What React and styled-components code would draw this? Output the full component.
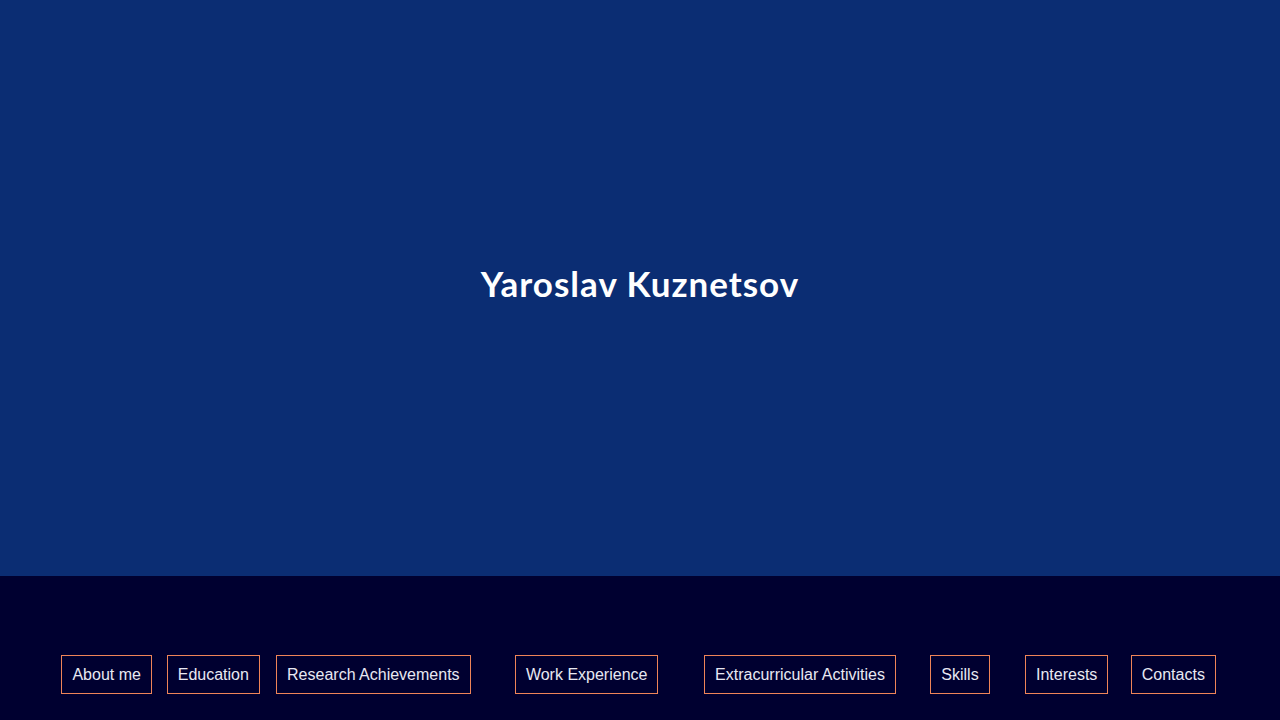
import React from "react";
import styled, { createGlobalStyle } from "styled-components";

const Global = createGlobalStyle`
  html, body { margin: 0; padding: 0; }
  body { background: #000030; font-family: "Liberation Sans", Arial, sans-serif; }
  * { box-sizing: border-box; }
`;

const Page = styled.div`
  display: flex;
  flex-direction: column;
  width: 100%;
  height: 720px;
  overflow: hidden;
`;

const Hero = styled.header`
  height: 576px;
  background: #0b2d73;
  display: flex;
  align-items: center;
  justify-content: center;
`;

const Title = styled.h1`
  margin: 0 0 10px;
  color: #ffffff;
  font-family: "Lato", "Noto Sans", sans-serif;
  font-weight: 700;
  font-size: 35px;
  letter-spacing: 1px;
  line-height: 1;
`;

const Footer = styled.nav`
  flex: 1;
  background: #000030;
  padding: 79px 53.33px 0;
  display: grid;
  grid-template-columns: 1fr 1fr 2fr 2fr 2fr 1fr 1fr 1fr;
  align-items: start;
`;

const Cell = styled.div`
  display: flex;
  justify-content: center;
`;

const NavButton = styled.a`
  display: inline-block;
  padding: 10px 10px;
  line-height: 17px;
  font-size: 16px;
  color: #e8e8f2;
  border: 1px solid #ee8458;
  text-decoration: none;
  white-space: nowrap;
  cursor: pointer;
`;

const items = [
  "About me",
  "Education",
  "Research Achievements",
  "Work Experience",
  "Extracurricular Activities",
  "Skills",
  "Interests",
  "Contacts",
];

export default function App() {
  return (
    <Page>
      <Global />
      <Hero>
        <Title>Yaroslav Kuznetsov</Title>
      </Hero>
      <Footer>
        {items.map((t) => (
          <Cell key={t}>
            <NavButton>{t}</NavButton>
          </Cell>
        ))}
      </Footer>
    </Page>
  );
}
